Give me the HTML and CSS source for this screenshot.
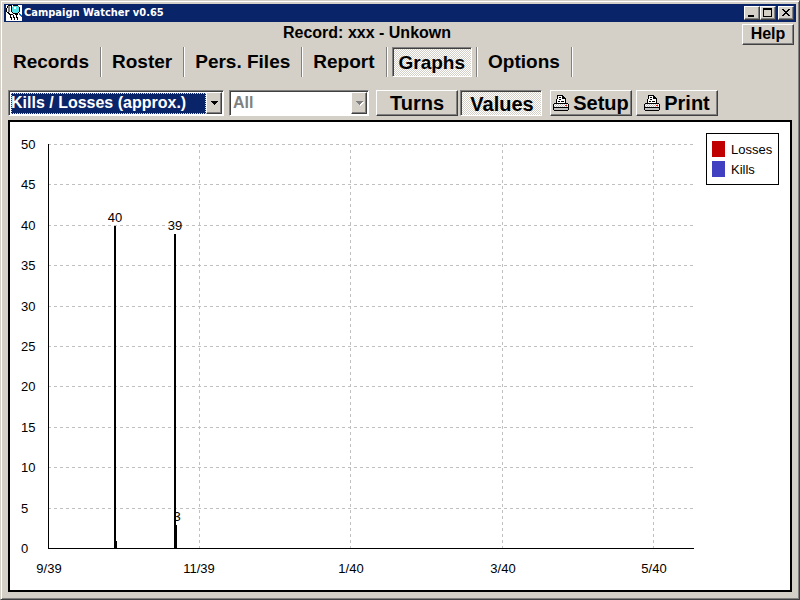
FILE: index.html
```
<!DOCTYPE html>
<html lang="en">
<head>
<meta charset="utf-8">
<title>Campaign Watcher v0.65</title>
<link rel="stylesheet" href="styles.css">
</head>
<body>
<svg width="0" height="0" class="defs" aria-hidden="true">
  <symbol id="printer" viewBox="0 0 16 16" shape-rendering="crispEdges">
    <path fill="#fff" d="M4 1h6l3 3v4H3V4h1zM1 9h14v6H1z"/>
    <path fill="#000" d="M4 0h6v1H4zM4 1h1v3H4zM3 4h1v4H3zM10 1h1v1h1v1h1v5h-1V4H9V1h1zM6 2h2v1H6zM6 4h2v1H6zM5 6h2v1H5zM8 6h3v1H8zM1 8h14v1H1zM0 9h1v6H0zM15 9h1v6h-1zM1 12h14v1H1zM1 15h14v1H1z"/>
    <path fill="#c0c0c0" d="M1 9h1v1H1zM3 9h1v1H3zM5 9h1v1H5zM7 9h1v1H7zM9 9h1v1H9zM11 9h1v1h-1zM13 9h1v1h-1zM2 10h1v1H2zM4 10h1v1H4zM6 10h1v1H6zM8 10h1v1H8zM10 10h1v1h-1zM1 11h1v1H1zM3 11h1v1H3zM5 11h1v1H5zM7 11h1v1H7zM9 11h1v1H9zM11 11h1v1h-1zM13 11h1v1h-1zM1 13h14v2H1z"/>
    <path fill="#f00" d="M12 10h2v1h-2z"/>
  </symbol>
</svg>
<div class="window">
  <header class="titlebar">
    <svg class="app-icon" viewBox="0 0 16 16" shape-rendering="crispEdges" aria-hidden="true">
      <path fill="#fff" d="M0 0h16v16H0z"/>
      <path fill="#000" d="M2 0h4v1H2zM1 1h1v2H1zM0 3h1v4H0zM5 1h1v2H5zM1 7h2v1H1zM2 8h2v1H2zM3 9h3v1H3zM4 10h1v3H4zM5 12h1v3H5zM7 10h1v3H7zM8 12h1v3H8zM10 10h1v3h-1zM11 12h1v3h-1zM7 0h5v1H7zM5 3h1v4H5zM6 7h1v1H6zM7 8h5v1H7zM12 7h1v1h-1zM13 2h1v5h-1zM6 9h1v1H6zM9 9h3v1H9z"/>
      <path fill="#808080" d="M2 1h2v6H2zM12 1h1v1h-1z"/>
      <path fill="#50e4e8" d="M7 1h5v1H7zM6 2h7v5H6zM7 7h5v1H7z"/>
      <path fill="#fff" d="M8 2h2v2H8z"/>
      <path fill="#0868c0" d="M13 8h1v1h1v1h1v2h-1v-1h-1v-1h-1z"/>
    </svg>
    <h1 class="app-name">Campaign Watcher v0.65</h1>
    <div class="window-buttons">
      <button class="raised" aria-label="Minimize"><svg viewBox="0 0 12 10" shape-rendering="crispEdges"><path d="M2 7h6v2H2z"/></svg></button>
      <button class="raised" aria-label="Maximize"><svg viewBox="0 0 12 10" shape-rendering="crispEdges"><path fill-rule="evenodd" d="M1 0h9v9H1zM2 2v6h7V2z"/></svg></button>
      <button class="raised close" aria-label="Close"><svg viewBox="0 0 12 10" shape-rendering="crispEdges"><path d="M2 1h2v1h1v1h2V2h1V1h2v1H9v1H8v1H7v1h1v1h1v1h1v1H8V7H7V6H5v1H4v1H2V7h1V6h1V5h1V4H4V3H3V2H2z"/></svg></button>
    </div>
  </header>

  <div class="record-bar">
    <h2 class="record">Record: xxx - Unkown</h2>
    <button class="raised help">Help</button>
  </div>

  <nav class="tabs">
    <div class="tab"><button>Records</button></div>
    <div class="tab"><button>Roster</button></div>
    <div class="tab"><button>Pers. Files</button></div>
    <div class="tab"><button>Report</button></div>
    <div class="tab"><button class="pressed" aria-pressed="true">Graphs</button></div>
    <div class="tab"><button>Options</button></div>
  </nav>

  <div class="toolbar">
    <div class="combo graph-kind">
      <select aria-label="Graph"><option>Kills / Losses (approx.)</option></select>
      <span class="arrow raised" aria-hidden="true"><svg viewBox="0 0 7 4" shape-rendering="crispEdges"><path d="M0 0h7v1H0zM1 1h5v1H1zM2 2h3v1H2zM3 3h1v1H3z"/></svg></span>
    </div>
    <div class="combo filter">
      <select aria-label="Filter" disabled><option>All</option></select>
      <span class="arrow raised" aria-hidden="true"><svg viewBox="0 0 7 4" shape-rendering="crispEdges"><path d="M0 0h7v1H0zM1 1h5v1H1zM2 2h3v1H2zM3 3h1v1H3z"/></svg></span>
    </div>
    <div class="group">
      <button class="raised tool">Turns</button>
      <button class="pressed tool" aria-pressed="true">Values</button>
    </div>
    <div class="group output">
      <button class="raised tool"><svg class="printer" aria-hidden="true"><use href="#printer"/></svg>Setup</button>
      <button class="raised tool"><svg class="printer" aria-hidden="true"><use href="#printer"/></svg>Print</button>
    </div>
  </div>

  <main class="chart">
    <svg viewBox="10 122 780 468" role="img" aria-label="Kills and losses by month">
      <g class="grid">
        <path d="M48 144.5H693M48 184.5H693M48 225.5H693M48 265.5H693M48 306.5H693M48 346.5H693M48 386.5H693M48 427.5H693M48 467.5H693M48 508.5H693"/>
        <path d="M199.500 144V548M350.500 144V548M502.500 144V548M653.500 144V548"/>
      </g>
      <g>
        <text x="21" y="149">50</text>
        <text x="21" y="189">45</text>
        <text x="21" y="230">40</text>
        <text x="21" y="270">35</text>
        <text x="21" y="311">30</text>
        <text x="21" y="351">25</text>
        <text x="21" y="391">20</text>
        <text x="21" y="432">15</text>
        <text x="21" y="472">10</text>
        <text x="21" y="513">5</text>
        <text x="21" y="553">0</text>
      </g>
      <g text-anchor="middle">
        <text x="49" y="573">9/39</text>
        <text x="199" y="573">11/39</text>
        <text x="351" y="573">1/40</text>
        <text x="503" y="573">3/40</text>
        <text x="654" y="573">5/40</text>
        <text x="115" y="222">40</text>
        <text x="175" y="230">39</text>
        <text x="177" y="521">3</text>
      </g>
      <g shape-rendering="crispEdges">
        <path d="M48 144h1v404h645v1H48z"/>
        <path d="M114 226h2v322h-2zM116 541h1v7h-1zM174 234h2v314h-2zM176 525h1v23h-1z"/>
        <rect x="706.500" y="133.500" width="72" height="51" fill="#fff" stroke="#000"/>
        <rect x="712" y="141" width="13" height="16" fill="#c00000"/>
        <rect x="712" y="161" width="13" height="16" fill="#4040c0"/>
      </g>
      <text x="731" y="154">Losses</text>
      <text x="731" y="174">Kills</text>
    </svg>
  </main>
</div>
</body>
</html>
```
FILE: styles.css
```
* { box-sizing: border-box; }

body {
  margin: 0;
  background: #d4d0c8;
  color: #000;
  font-family: "Liberation Sans", Arial, sans-serif;
}

.defs { position: absolute; }

h1, h2 { margin: 0; }

button {
  display: flex;
  align-items: center;
  justify-content: center;
  margin: 0;
  padding: 0;
  border: 0;
  background: #d4d0c8;
  color: #000;
  font: bold 20px/24px "Liberation Sans", Arial, sans-serif;
}

.window {
  display: flex;
  flex-direction: column;
  min-height: 100vh;
  padding: 3px 3px 7px;
  border: 1px solid;
  border-color: #d4d0c8 #404040 #404040 #d4d0c8;
  box-shadow: inset 1px 1px #fff, inset -1px -1px #808080;
}

.raised {
  background: #d4d0c8;
  border: 1px solid;
  border-color: #fff #404040 #404040 #fff;
  box-shadow: inset -1px -1px #808080;
}

.pressed {
  border: 1px solid;
  border-color: #808080 #fff #fff #808080;
  box-shadow: inset 1px 1px #404040;
  background: repeating-conic-gradient(#fff 0 25%, #d4d0c8 0 50%) 0 0 / 2px 2px;
}

.titlebar {
  display: flex;
  align-items: center;
  height: 18px;
  padding: 0 2px;
  background: #0a246a;
  color: #fff;
}

.app-icon { width: 16px; height: 16px; }

.app-name {
  flex: 1;
  padding-left: 2px;
  font: bold 11px/16px "DejaVu Sans Condensed", "Noto Sans", sans-serif;
}

.window-buttons { display: flex; }
.window-buttons button { width: 16px; height: 14px; }
.window-buttons svg { width: 12px; height: 10px; }
.window-buttons .close { margin-left: 2px; }

.record-bar {
  display: flex;
  align-items: flex-start;
  height: 25px;
}

.record {
  flex: 1;
  padding: 1px 12px 0 0;
  font-size: 16px;
  line-height: 20px;
  text-align: center;
}

.help {
  width: 52px;
  height: 21px;
  margin: 2px 2px 0 0;
  padding-bottom: 2px;
  font-size: 16px;
  line-height: 18px;
}

.tabs { display: flex; height: 30px; }

.tab {
  display: flex;
  border-right: 1px solid #fff;
  box-shadow: inset -1px 0 #808080;
  padding-right: 1px;
}

.tab button { padding: 0 11px 0 10px; font-size: 19px; }
.tab:first-child button { padding-left: 9px; }
.tab .pressed { margin: 0 4px; padding: 2px 6px 0; }

.toolbar {
  display: flex;
  align-items: flex-start;
  height: 43px;
  padding: 13px 4px 0;
}

.combo {
  display: flex;
  height: 26px;
  margin-right: 5px;
  padding: 1px;
  border: 1px solid;
  border-color: #808080 #fff #fff #808080;
  box-shadow: inset 1px 1px #404040;
  background: #fff;
}

.graph-kind { width: 216px; }
.filter { width: 140px; margin-right: 7px; }

.combo select {
  flex: 1;
  min-width: 0;
  margin: 1px 0 0 1px;
  padding: 0 0 2px;
  border: 0;
  border-radius: 0;
  appearance: none;
  background: #0a246a;
  outline: 1px dotted #f5db95;
  outline-offset: -1px;
  color: #fff;
  font: bold 16px/20px "Liberation Sans", Arial, sans-serif;
}

.combo select:disabled {
  padding-left: 1px;
  outline: 0;
  background: #fff;
  color: #808080;
  opacity: 1;
}

.arrow {
  display: flex;
  align-items: center;
  justify-content: center;
  width: 16px;
  pointer-events: none;
}

.arrow svg { width: 7px; height: 4px; }
.filter .arrow svg { fill: #808080; filter: drop-shadow(1px 1px #fff); }

.group { display: flex; gap: 2px; margin-right: 8px; }
.output { gap: 4px; }

.tool { width: 82px; height: 26px; }
.tool.pressed { padding: 2px 0 0 2px; }
.printer { width: 16px; height: 16px; margin-right: 4px; }

.chart {
  flex: 1;
  margin: 0 4px;
  border: 2px solid #000;
  background: #fff;
}

.chart svg { display: block; width: 100%; height: auto; }

.chart text {
  font-size: 13px;
  fill: #000;
}

.grid {
  fill: none;
  stroke: #c0c0c0;
  stroke-dasharray: 3 3;
}
```
